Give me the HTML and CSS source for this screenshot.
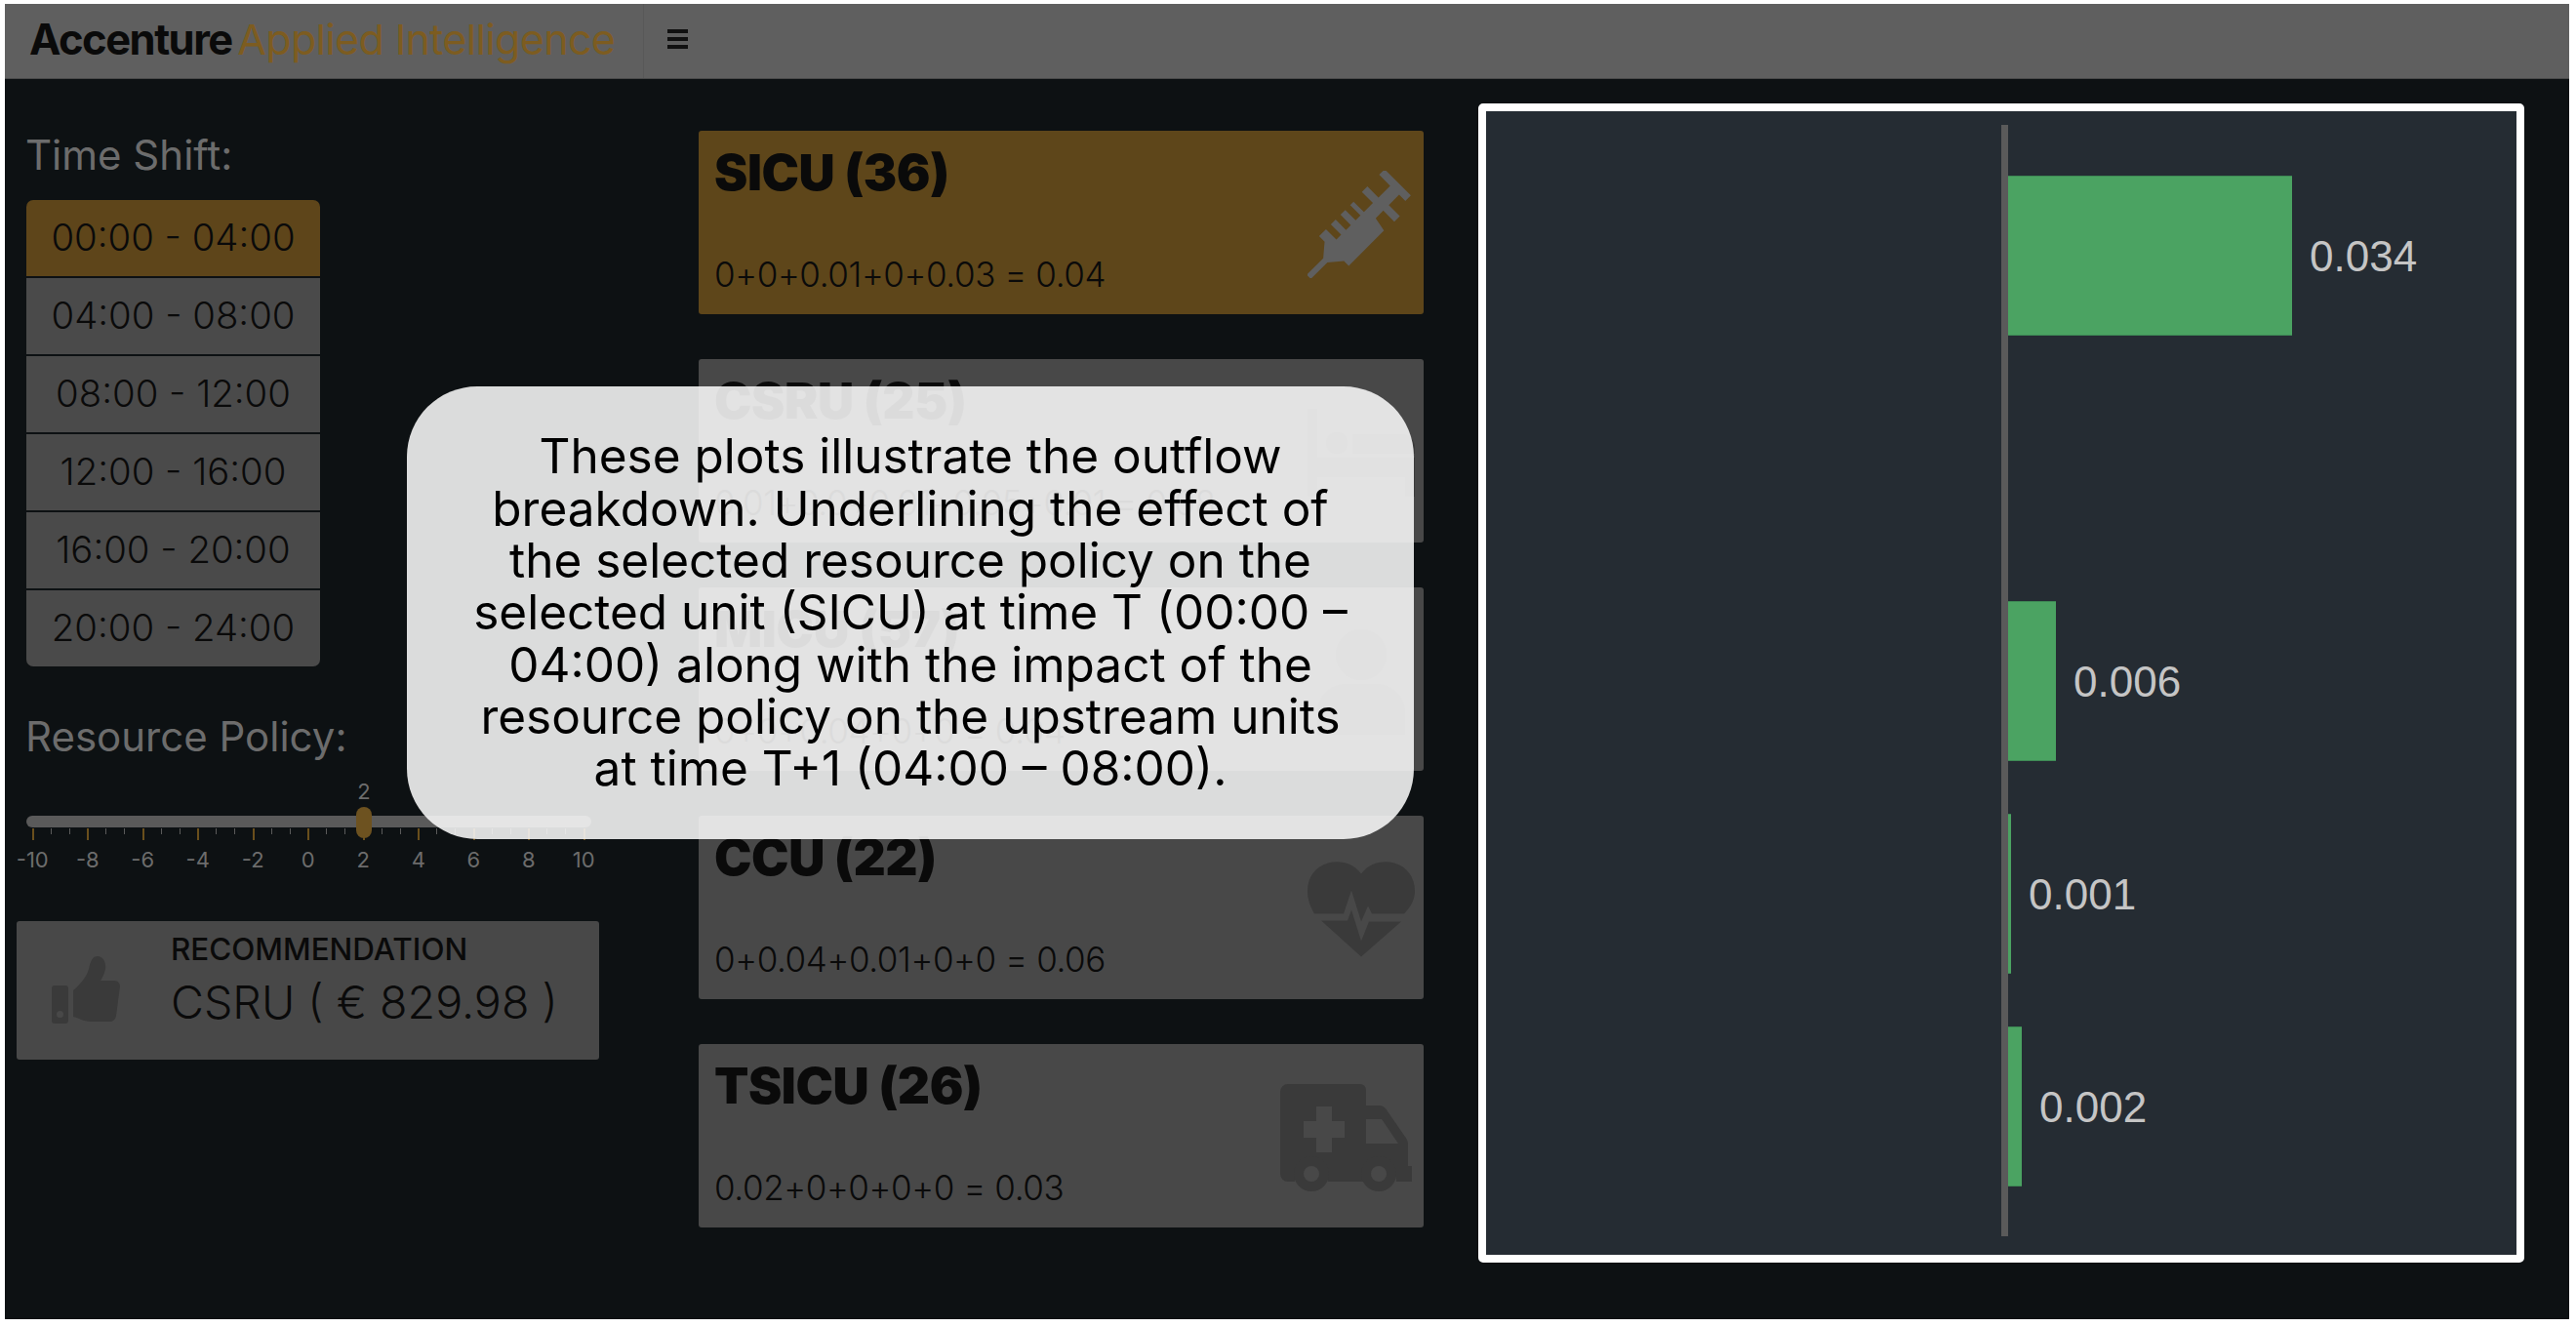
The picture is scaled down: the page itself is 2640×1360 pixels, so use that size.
FILE: index.html
```html
<!DOCTYPE html>
<html>

<head>
    <title>Accenture Applied Intelligence</title>
    <link rel="stylesheet" href="styles.css">
</head>

<body>
    <div class="page">
        <header class="topbar">
            <div class="brand"><b>Accenture</b> <span>Applied Intelligence</span></div>
            <button class="menu-toggle" aria-label="Menu"><i></i><i></i><i></i></button>
        </header>

        <main class="main">
            <section class="sidebar">
                <h2 class="side-label time-label">Time Shift:</h2>
                <div class="shift-list">
                    <div class="shift active">00:00 - 04:00</div>
                    <div class="shift">04:00 - 08:00</div>
                    <div class="shift">08:00 - 12:00</div>
                    <div class="shift">12:00 - 16:00</div>
                    <div class="shift">16:00 - 20:00</div>
                    <div class="shift">20:00 - 24:00</div>
                </div>

                <h2 class="side-label policy-label">Resource Policy:</h2>
                <div class="slider">
                    <div class="slider-track">
                        <div class="slider-thumb"><span>2</span></div>
                    </div>
                    <div class="slider-ticks"></div>
                    <div class="slider-marks">
                        <span>-10</span><span>-8</span><span>-6</span><span>-4</span><span>-2</span><span>0</span><span>2</span><span>4</span><span>6</span><span>8</span><span>10</span>
                    </div>
                </div>

                <div class="recommendation">
                    <svg class="thumb-icon" viewBox="0 0 70 70">
                        <path fill-rule="evenodd" d="M3 31h11a3 3 0 0 1 3 3v33a3 3 0 0 1-3 3H3a3 3 0 0 1-3-3V34a3 3 0 0 1 3-3zm5.500 26a3.500 3.500 0 1 0 0 7 3.500 3.500 0 0 0 0-7z"/>
                        <path d="M22 36C29 30 36 22 38 14 40 5 42 1 47 1c6 0 9 7 8 13-1 6-4 10-5 12h14c4 0 6 3 6 6l-4 30c-1 4-3 6-7 6H40c-8 0-12-4-18-5z"/>
                    </svg>
                    <div class="rec-text">
                        <div class="rec-title">RECOMMENDATION</div>
                        <div class="rec-value">CSRU ( € 829.98 )</div>
                    </div>
                </div>
            </section>

            <section class="units">
                <div class="unit selected">
                    <h3>SICU (36)</h3>
                    <p>0+0+0.01+0+0.03 = 0.04</p>
                    <svg class="unit-icon" viewBox="0 0 110 110">
                        <g transform="translate(55 55) rotate(-45)">
                            <path d="M-76-3h24l13-11v-8h10v15h7v-15h7v15h7v-15h7v15h7v-15h5v15h13v-16h8v16h17v-16h8v38h-8V6H34v16h-8V6H15l-3 15h-51v-7l-13-11h-24z"/>
                        </g>
                    </svg>
                </div>
                <div class="unit">
                    <h3>CSRU (25)</h3>
                    <p>0.01+0.0+0.01+0.05+0.01 = 0.08</p>
                    <svg class="unit-icon" viewBox="0 0 110 110">
                        <path d="M0 10h10v50h100v40h-10V80H10v20H0z"/>
                        <circle cx="30" cy="45" r="11"/>
                        <path d="M46 36h50c8 0 14 6 14 14v6H46z"/>
                    </svg>
                </div>
                <div class="unit">
                    <h3>MICU (57)</h3>
                    <p>0+0+0.04+0+0 = 0.04</p>
                    <svg class="unit-icon" viewBox="0 0 110 110">
                        <circle cx="55" cy="28" r="26"/>
                        <path d="M10 110V88c0-18 14-30 30-30h30c16 0 30 12 30 30v22z"/>
                    </svg>
                </div>
                <div class="unit">
                    <h3>CCU (22)</h3>
                    <p>0+0.04+0.01+0+0 = 0.06</p>
                    <svg class="unit-icon" viewBox="0 0 110 97">
                        <path d="M55 12C46 0 32-2 21 1 8 5 0 15 0 30c0 8 3 16 7 23h30l8-24 10 32 7-16 4 8h33c7-7 11-15 11-23C110 15 102 5 89 1 78-2 64 0 55 12z"/>
                        <path d="M14 60h27l4-11 10 32 8-20 3 0h30L55 97z"/>
                    </svg>
                </div>
                <div class="unit">
                    <h3>TSICU (26)</h3>
                    <p>0.02+0+0+0+0 = 0.03</p>
                    <svg class="unit-icon ambulance" viewBox="0 0 138 110">
                        <path fill-rule="evenodd" d="M8 0h74a6 6 0 0 1 6 6v16h13c3 0 5 1 7 3l20 29c2 2 3 5 3 8v22h4v16h-16a17 17 0 0 0-34 0H49a17 17 0 0 0-34 0H8a8 8 0 0 1-8-8V8a8 8 0 0 1 8-8zm29 23v15H24v17h13v15h16V55h13V38H53V23zm51 13v25h33L104 36z"/>
                        <circle cx="32" cy="92" r="13" fill="none" stroke="currentColor" stroke-width="10"/>
                        <circle cx="101" cy="92" r="13" fill="none" stroke="currentColor" stroke-width="10"/>
                    </svg>
                </div>
            </section>

            <section class="chart">
                <div class="axis">
                    <div class="row"><div class="bar" style="width: 291px"></div><span>0.034</span></div>
                    <div class="row"></div>
                    <div class="row"><div class="bar" style="width: 49px"></div><span>0.006</span></div>
                    <div class="row"><div class="bar" style="width: 3px"></div><span>0.001</span></div>
                    <div class="row"><div class="bar" style="width: 14px"></div><span>0.002</span></div>
                </div>
            </section>
        </main>

        <div class="tour-bubble">
            These plots illustrate the outflow<br>
            breakdown. Underlining the effect of<br>
            the selected resource policy on the<br>
            selected unit (SICU) at time T (00:00 –<br>
            04:00) along with the impact of the<br>
            resource policy on the upstream units<br>
            at time T+1 (04:00 – 08:00).
        </div>
    </div>
</body>

</html>
```

FILE: styles.css
```css
* {
    box-sizing: border-box;
}

html,
body {
    margin: 0;
    background: #fff;
}

body {
    padding: 4px 7px 8px 5px;
    font-family: Inter, "Noto Sans", sans-serif;
    color: #0a0a0a;
}

.page {
    position: relative;
    height: 1348px;
    background: #0d1113;
    overflow: hidden;
}

/* top bar */
.topbar {
    display: flex;
    align-items: stretch;
    height: 77px;
    background: #5f5f5f;
    border-bottom: 1px solid #4a4a4a;
}

.brand {
    width: 655px;
    padding-left: 25px;
    font-size: 43px;
    line-height: 73px;
    letter-spacing: -0.65px;
    white-space: nowrap;
    border-right: 1px solid #585858;
}

.brand b {
    font-size: 43.500px;
    font-weight: 700;
    letter-spacing: -1.5px;
}

.brand span {
    margin-left: -6px;
    color: #7d5c20;
    font-weight: 400;
}

.menu-toggle {
    display: flex;
    flex-direction: column;
    justify-content: center;
    gap: 4px;
    width: 66px;
    padding: 0 0 4px 24px;
    background: none;
    border: 0;
}

.menu-toggle i {
    display: block;
    width: 21px;
    height: 4px;
    background: #111;
}

/* layout */
.main {
    display: flex;
    align-items: flex-start;
}

.sidebar {
    width: 711px;
    padding-left: 22px;
}

.units {
    width: 743px;
    padding-top: 53px;
    display: flex;
    flex-direction: column;
    gap: 46px;
}

.chart {
    width: 1072px;
    height: 1188px;
    margin: 25px 0 0 56px;
    padding: 14px 0 19px 528px;
    background: #252c33;
    border: 8px solid #fff;
    border-radius: 5px;
}

/* sidebar */
.side-label {
    margin: 0 0 0 -1px;
    font-size: 42px;
    font-weight: 400;
    line-height: 48px;
    color: #6c6c6c;
}

.time-label {
    margin-top: 54px;
}

.shift-list {
    width: 301px;
    margin-top: 22px;
    display: flex;
    flex-direction: column;
    gap: 2px;
    border-radius: 7px;
    overflow: hidden;
}

.shift {
    height: 78px;
    padding-bottom: 2px;
    line-height: 76px;
    text-align: center;
    font-size: 38.300px;
    font-weight: 300;
    background: #4a4a4a;
}

.shift.active {
    background: #5e451a;
}

.policy-label {
    margin-top: 48px;
}

.slider {
    margin-top: 57px;
}

.slider-track {
    position: relative;
    width: 579px;
    height: 12px;
    background: #5a5a5a;
    border-radius: 6px;
}

.slider-thumb {
    position: absolute;
    left: 338px;
    top: -9px;
    width: 16px;
    height: 32px;
    background: #6d5220;
    border-radius: 8px;
}

.slider-thumb span {
    position: absolute;
    left: -8px;
    top: -29px;
    width: 32px;
    text-align: center;
    font-size: 22px;
    line-height: 26px;
    color: #6c6c6c;
}

.slider-ticks {
    width: 567px;
    height: 12px;
    margin: 1px 0 0 6px;
    background:
        repeating-linear-gradient(90deg, #6a4f1c 0 2px, transparent 2px 56.5px),
        repeating-linear-gradient(90deg, #5a5a5a 0 1px, transparent 1px 18.83px) 0 0 / 100% 6px no-repeat;
}

.slider-marks {
    display: flex;
    margin: 7px 0 0 -22px;
    font-size: 22px;
    line-height: 26px;
    color: #6c6c6c;
}

.slider-marks span {
    flex: 0 0 56.5px;
    text-align: center;
}

.recommendation {
    display: flex;
    width: 597px;
    height: 142px;
    margin: 50px 0 0 -10px;
    background: #484848;
    border-radius: 3px;
}

.thumb-icon {
    width: 70px;
    height: 70px;
    margin: 35px 52px 0 36px;
    fill: #3a3a3a;
}

.rec-title {
    margin-top: 12px;
    font-size: 31.400px;
    font-weight: 500;
    line-height: 34px;
}

.rec-value {
    margin-top: 9px;
    font-size: 46.600px;
    font-weight: 300;
    line-height: 56px;
}

/* unit cards */
.unit {
    position: relative;
    height: 188px;
    padding: 14px 16px;
    background: #484848;
    border-radius: 3px;
}

.unit.selected {
    background: #5e461a;
}

.unit h3 {
    margin: 0;
    font-size: 51.500px;
    font-weight: 900;
    line-height: 56px;
    letter-spacing: -0.4px;
}

.unit p {
    margin: 56px 0 0;
    font-size: 35px;
    font-weight: 300;
    line-height: 42px;
    letter-spacing: -0.4px;
}

.unit-icon {
    position: absolute;
    right: 9px;
    top: 41px;
    width: 110px;
    height: 110px;
    fill: #3a3a3a;
    color: #3a3a3a;
}

.unit.selected .unit-icon {
    fill: #5f5f5f;
}

.unit-icon.ambulance {
    width: 138px;
}

/* bar chart */
.axis {
    height: 100%;
    padding-top: 25px;
    border-left: 7px solid #5a5a5a;
}

.row {
    display: flex;
    align-items: center;
    height: 218px;
}

.bar {
    height: 164px;
    background: #4ba362;
    border-top: 1px solid #3e8a55;
    border-bottom: 1px solid #3e8a55;
}

.row span {
    margin-left: 18px;
    padding-top: 2px;
    font-family: "Liberation Sans", Arial, sans-serif;
    font-size: 44px;
    color: #c5c5c5;
}

/* walkthrough bubble */
.tour-bubble {
    position: absolute;
    left: 412px;
    top: 392px;
    width: 1032px;
    height: 464px;
    display: flex;
    flex-direction: column;
    justify-content: center;
    text-align: center;
    font-size: 49.500px;
    line-height: 53.300px;
    color: #000;
    background: rgba(248, 248, 248, 0.88);
    border-radius: 72px;
}
```
